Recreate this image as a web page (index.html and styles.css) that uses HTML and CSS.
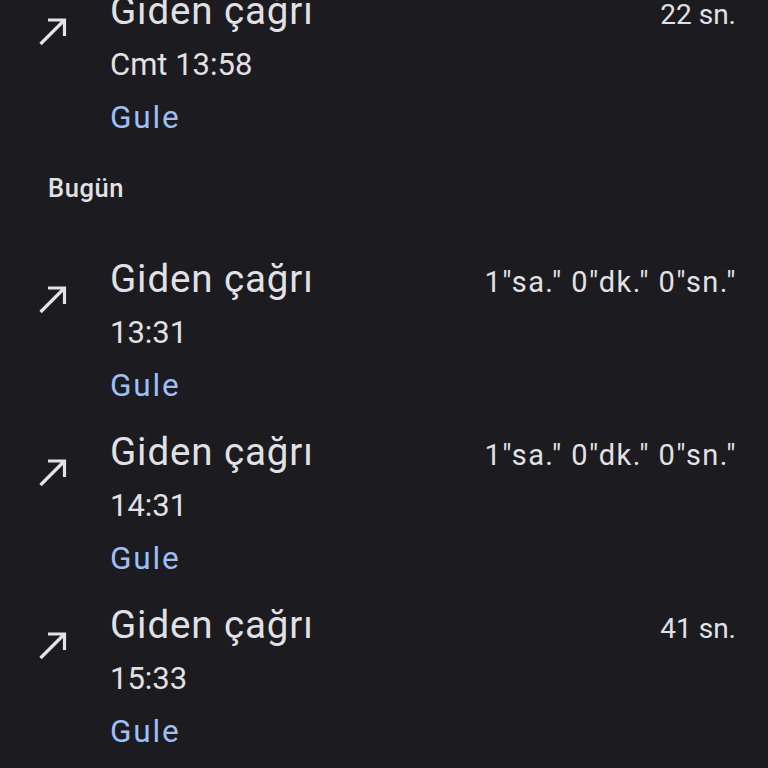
FILE: index.html
```html
<!DOCTYPE html>
<html lang="tr">
<head>
<meta charset="utf-8">
<title>Arama geçmişi</title>
<link rel="stylesheet" href="styles.css">
</head>
<body>
<div class="list">
  <div class="call">
    <div class="icon"><svg viewBox="0 0 34 34" width="34" height="34"><path d="M4.5 29 L28.5 5 M12 5 H28.5 V21" fill="none" stroke="#e3e2e6" stroke-width="3.2"/></svg></div>
    <div class="title">Giden çağrı</div>
    <div class="dur">22 sn.</div>
    <div class="time">Cmt 13:58</div>
    <div class="name">Gule</div>
  </div>

  <div class="section">Bugün</div>

  <div class="call">
    <div class="icon"><svg viewBox="0 0 34 34" width="34" height="34"><path d="M4.5 29 L28.5 5 M12 5 H28.5 V21" fill="none" stroke="#e3e2e6" stroke-width="3.2"/></svg></div>
    <div class="title">Giden çağrı</div>
    <div class="dur long">1"sa." 0"dk." 0"sn."</div>
    <div class="time">13:31</div>
    <div class="name">Gule</div>
  </div>

  <div class="call">
    <div class="icon"><svg viewBox="0 0 34 34" width="34" height="34"><path d="M4.5 29 L28.5 5 M12 5 H28.5 V21" fill="none" stroke="#e3e2e6" stroke-width="3.2"/></svg></div>
    <div class="title">Giden çağrı</div>
    <div class="dur long">1"sa." 0"dk." 0"sn."</div>
    <div class="time">14:31</div>
    <div class="name">Gule</div>
  </div>

  <div class="call">
    <div class="icon"><svg viewBox="0 0 34 34" width="34" height="34"><path d="M4.5 29 L28.5 5 M12 5 H28.5 V21" fill="none" stroke="#e3e2e6" stroke-width="3.2"/></svg></div>
    <div class="title">Giden çağrı</div>
    <div class="dur">41 sn.</div>
    <div class="time">15:33</div>
    <div class="name">Gule</div>
  </div>
</div>
</body>
</html>
```

FILE: styles.css
```css
html, body {
  margin: 0;
  padding: 0;
  background: #1c1b20;
  overflow: hidden;
}
body {
  font-family: Roboto, "Noto Sans", sans-serif;
  color: #e1e1e5;
  height: 768px;
}
.list {
  margin-top: -13px;
}
.call {
  display: grid;
  grid-template-columns: 110px 1fr auto;
  grid-template-rows: 48px 60px 46px;
  padding-right: 32px;
  padding-bottom: 19px;
}
.icon {
  grid-column: 1;
  grid-row: 1 / 4;
  padding-left: 36px;
  padding-top: 28px;
}
.icon svg {
  display: block;
}
.title {
  grid-column: 2;
  grid-row: 1;
  font-size: 38.5px;
  letter-spacing: 0.9px;
  line-height: 48px;
  align-self: baseline;
}
.dur {
  grid-column: 3;
  grid-row: 1;
  font-size: 28px;
  line-height: 48px;
  align-self: baseline;
  text-align: right;
}
.dur.long {
  font-size: 29px;
  letter-spacing: 1.4px;
  margin-right: -1px;
}
.time {
  grid-column: 2 / 4;
  grid-row: 2;
  font-size: 31px;
  line-height: 60px;
}
.name {
  grid-column: 2 / 4;
  grid-row: 3;
  font-size: 31.5px;
  letter-spacing: 1.8px;
  line-height: 46px;
  color: #9dbff5;
}
.section {
  font-size: 25.5px;
  font-weight: 500;
  letter-spacing: 0.6px;
  line-height: 32px;
  padding: 12px 0 51px 48px;
}
```
